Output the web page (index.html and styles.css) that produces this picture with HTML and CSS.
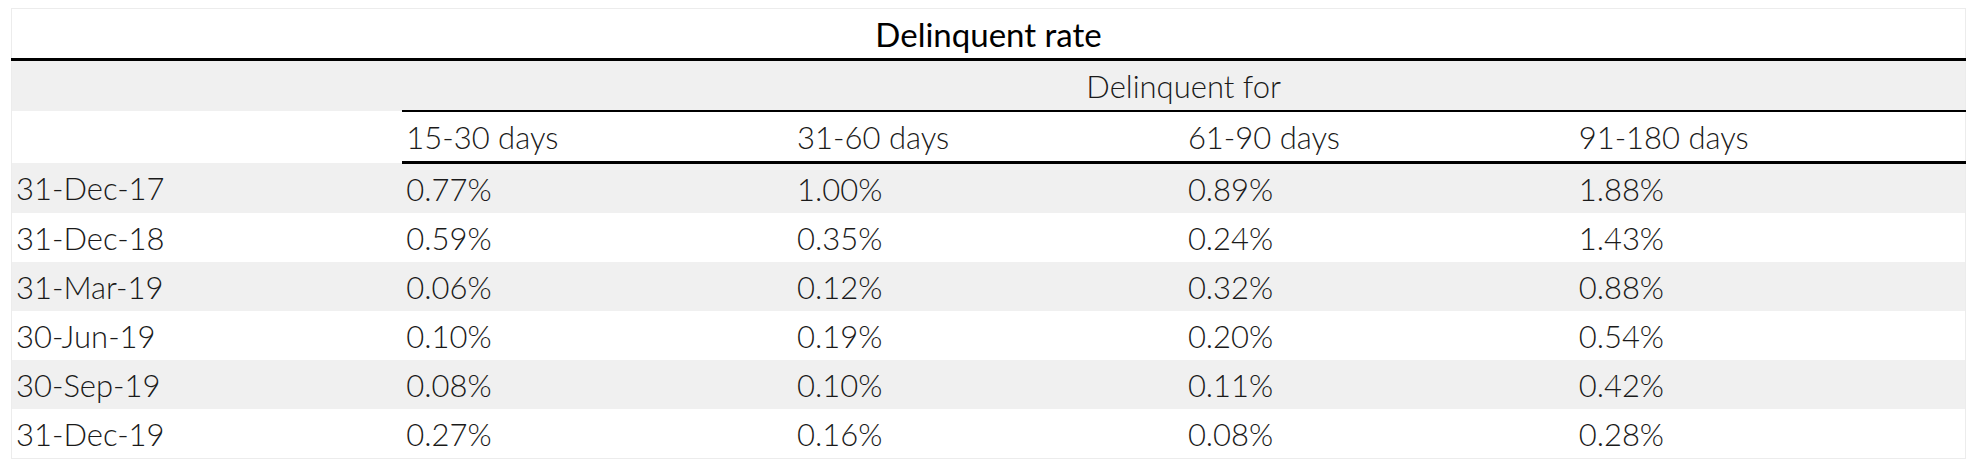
FILE: index.html
```html
<!DOCTYPE html>
<html lang="en">
<head>
<meta charset="utf-8">
<title>Delinquent rate</title>
<link rel="stylesheet" href="styles.css">
</head>
<body>
<div class="wrap">
<table class="rates">
  <colgroup>
    <col class="c"><col class="c"><col class="c"><col class="c"><col class="c">
  </colgroup>
  <thead>
    <tr class="title-row"><th colspan="5" class="title">Delinquent rate</th></tr>
    <tr class="group-row"><th class="blank"></th><th colspan="4" class="group">Delinquent for</th></tr>
    <tr class="head-row"><th class="blank"></th><th>15-30 days</th><th>31-60 days</th><th>61-90 days</th><th>91-180 days</th></tr>
  </thead>
  <tbody>
    <tr><td>31-Dec-17</td><td>0.77%</td><td>1.00%</td><td>0.89%</td><td>1.88%</td></tr>
    <tr><td>31-Dec-18</td><td>0.59%</td><td>0.35%</td><td>0.24%</td><td>1.43%</td></tr>
    <tr><td>31-Mar-19</td><td>0.06%</td><td>0.12%</td><td>0.32%</td><td>0.88%</td></tr>
    <tr><td>30-Jun-19</td><td>0.10%</td><td>0.19%</td><td>0.20%</td><td>0.54%</td></tr>
    <tr><td>30-Sep-19</td><td>0.08%</td><td>0.10%</td><td>0.11%</td><td>0.42%</td></tr>
    <tr><td>31-Dec-19</td><td>0.27%</td><td>0.16%</td><td>0.08%</td><td>0.28%</td></tr>
  </tbody>
</table>
</div>
</body>
</html>
```
FILE: styles.css
```css
html, body {
  margin: 0;
  padding: 0;
  background: #ffffff;
}
.wrap {
  padding: 8px 0 0 11px;
}
.rates {
  width: 1955px;
  table-layout: fixed;
  border-collapse: collapse;
  border: 1px solid #ececec;
  font-family: "Lato", "Liberation Sans", sans-serif;
  font-weight: 300;
  font-size: 31px;
  color: #1a1a1a;
}
.rates th,
.rates td {
  padding: 0 0 0 4px;
  text-align: left;
  font-weight: 300;
  white-space: nowrap;
  vertical-align: middle;
}
.title-row th {
  height: 49px;
  text-align: center;
  font-weight: 400;
  font-size: 33px;
  color: #000;
  border-bottom: 3px solid #000;
  padding: 0;
}
.group-row th {
  height: 49px;
  background: #f0f0f0;
}
.group-row .group {
  text-align: center;
  padding: 0;
  border-bottom: 2px solid #000;
}
.head-row th {
  height: 49px;
  border-bottom: 3px solid #000;
}
.head-row .blank {
  border-bottom: none;
}
.rates tbody td {
  height: 49px;
}
.rates tbody tr:nth-child(odd) td {
  background: #f0f0f0;
}
```
